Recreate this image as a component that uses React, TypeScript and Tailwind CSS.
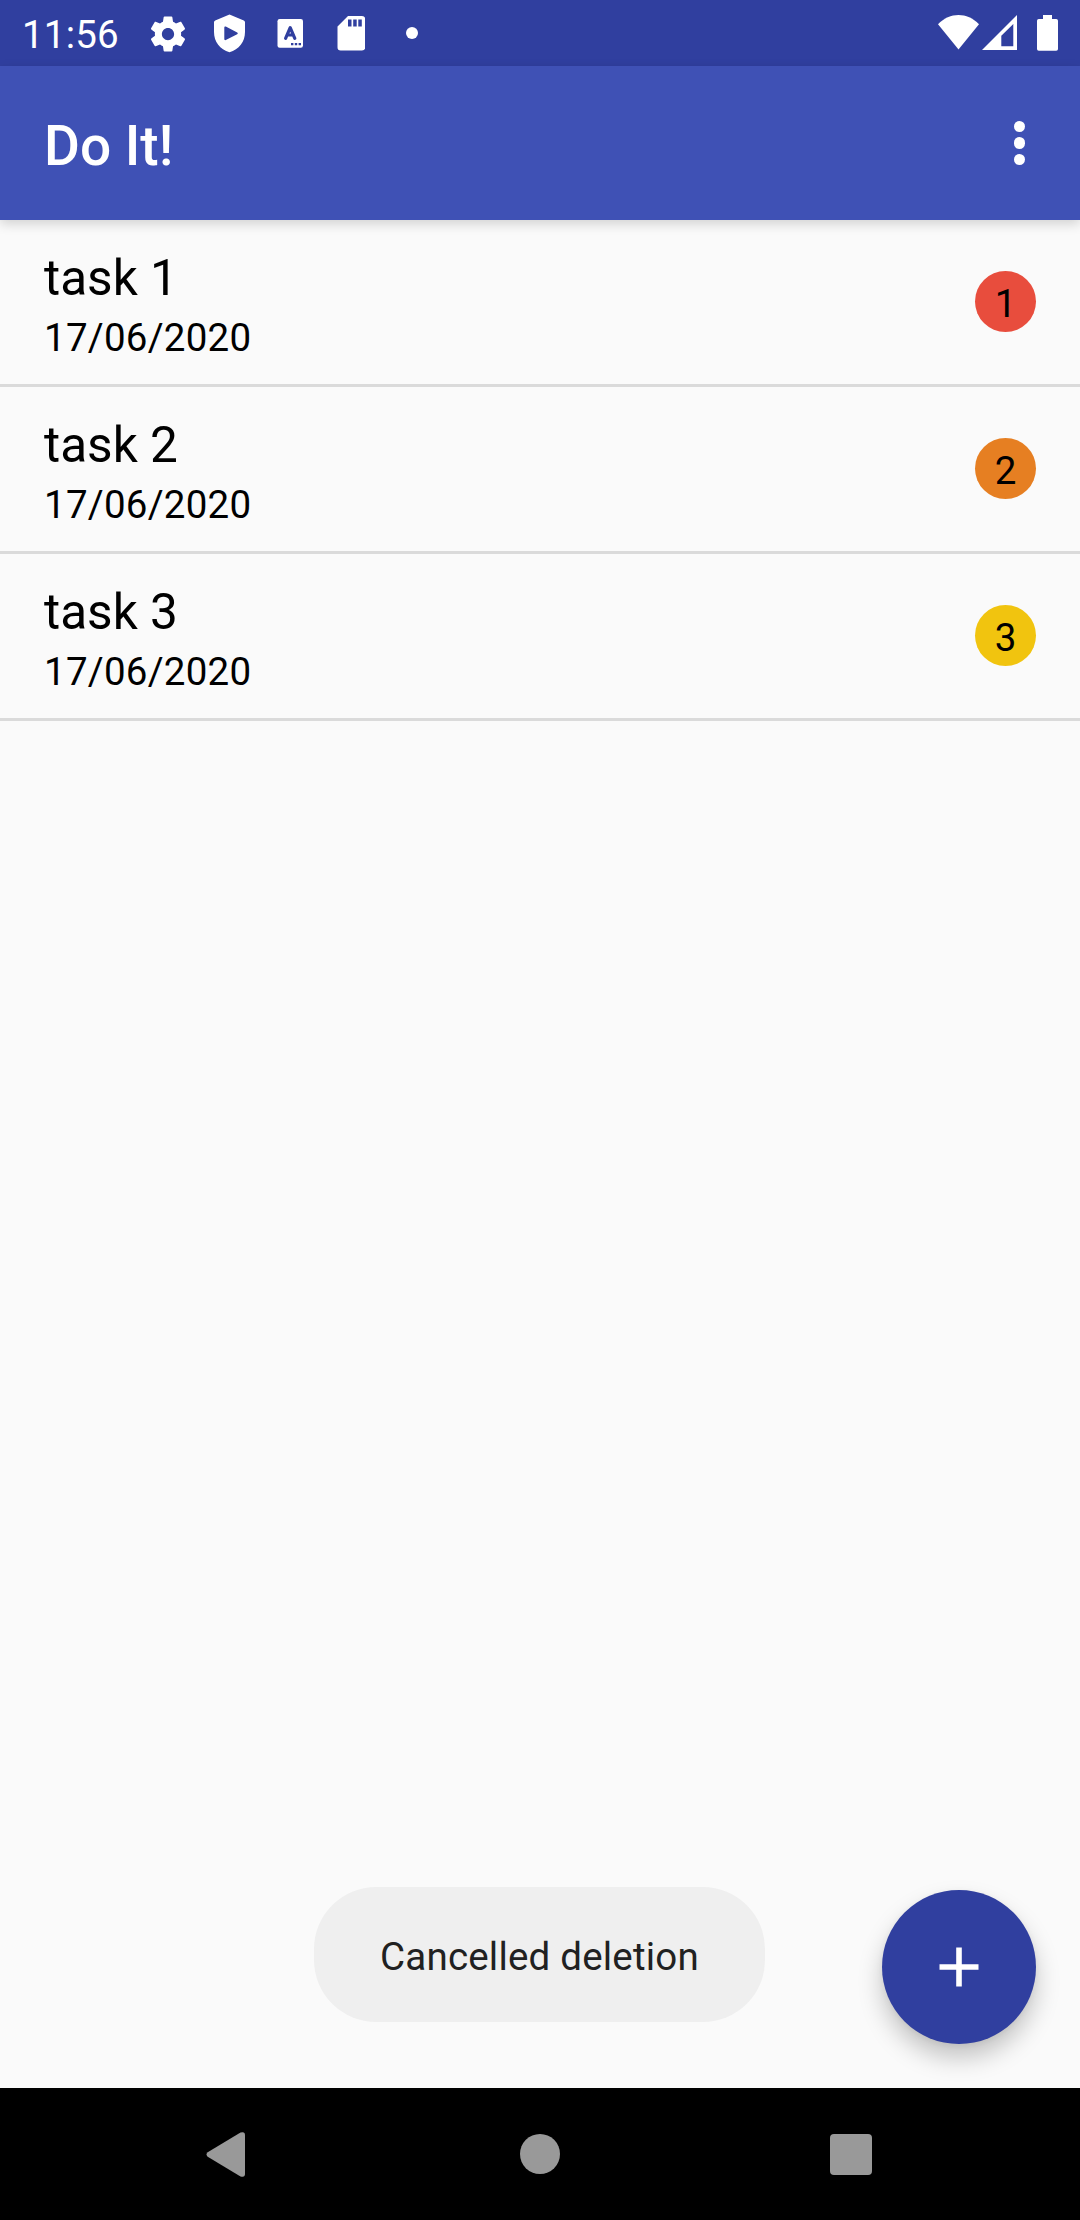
import React from "react";

const tasks = [
  { name: "task 1", date: "17/06/2020", priority: 1, color: "bg-[#e84d3d]" },
  { name: "task 2", date: "17/06/2020", priority: 2, color: "bg-[#e67f22]" },
  { name: "task 3", date: "17/06/2020", priority: 3, color: "bg-[#f1c40f]" },
];

function StatusBar() {
  return (
    <div className="flex h-[66px] items-center bg-[#303f9f] text-white">
      <span className="ml-[22px] w-[123px] pt-[3px] text-[38.5px] leading-[46px] tracking-[0.2px]">11:56</span>
      <svg className="ml-[2px] mt-[1px] size-[42px]" viewBox="0 0 24 24" fill="currentColor">
        <path d="M19.43 12.98c.04-.32.07-.64.07-.98s-.03-.66-.07-.98l2.11-1.65c.19-.15.24-.42.12-.64l-2-3.46c-.12-.22-.39-.3-.61-.22l-2.49 1c-.52-.4-1.08-.73-1.69-.98l-.38-2.65C14.46 2.18 14.25 2 14 2h-4c-.25 0-.46.18-.49.42l-.38 2.65c-.61.25-1.17.59-1.69.98l-2.49-1c-.23-.09-.49 0-.61.22l-2 3.46c-.13.22-.07.49.12.64l2.11 1.65c-.04.32-.07.65-.07.98s.03.66.07.98l-2.11 1.65c-.19.15-.24.42-.12.64l2 3.46c.12.22.39.3.61.22l2.49-1c.52.4 1.08.73 1.69.98l.38 2.65c.03.24.24.42.49.42h4c.25 0 .46-.18.49-.42l.38-2.65c.61-.25 1.17-.59 1.69-.98l2.49 1c.23.09.49 0 .61-.22l2-3.46c.12-.22.07-.49-.12-.64l-2.11-1.65zM12 15.5c-1.93 0-3.5-1.57-3.5-3.5s1.57-3.5 3.5-3.5 3.5 1.57 3.5 3.5-1.57 3.5-3.5 3.5z" />
      </svg>
      <svg className="ml-[25px] h-[66px] w-[31px]" viewBox="214 0 31 66" fill="currentColor" fillRule="evenodd">
        <path d="M229.5 14.5L243.8 20.4Q245 21 245 22.2V32C245 42 239 49.3 229.5 52.3C220 49.3 214 42 214 32V22.2Q214 21 215.2 20.4ZM224.3 27.5V39Q224.3 40.6 225.8 40L237.2 34.2Q238.6 33.3 237.2 32.5L225.8 26.5Q224.3 26 224.3 27.5Z" />
      </svg>
      <svg className="ml-8 h-[66px] w-[26px]" viewBox="277 0 26 66">
        <rect x="277.5" y="19" width="25.5" height="28.7" rx="2.2" fill="currentColor" />
        <path d="M285.6 38.3L290.2 27.6L294.8 38.3M287 35H293.5" fill="none" stroke="#303f9f" strokeWidth="3.2" strokeLinecap="round" strokeLinejoin="round" />
        <path d="M291 43h2.4v2.2H291zM294.8 43h2.4v2.2h-2.4zM298.6 43h2.4v2.2h-2.4z" fill="#303f9f" />
      </svg>
      <svg className="ml-[34px] h-[66px] w-[28px]" viewBox="337 0 28 66" fill="currentColor" fillRule="evenodd">
        <path d="M348 16H362Q365.2 16 365.2 19.2V47.3Q365.2 50.5 362 50.5H340.7Q337.5 50.5 337.5 47.3V26.5ZM348 19.5V26.5H351.5V19.5ZM353.2 19.5V26.5H356.7V19.5ZM358.3 19.5V26.5H361.8V19.5Z" />
      </svg>
      <span className="ml-[41px] size-3 rounded-full bg-white" />
      <svg className="ml-auto h-[66px] w-[42px]" viewBox="938 0 42 66" fill="currentColor">
        <path d="M938 24.3C950 12 967 12 979 24.3L958.5 49.5Z" />
      </svg>
      <svg className="ml-[2px] h-[66px] w-[35px]" viewBox="982 0 35 66" fill="currentColor" fillRule="evenodd">
        <path d="M982 50L1017 15V50ZM1001.3 35.8V46.3H1013.3V24Z" />
      </svg>
      <svg className="ml-5 mr-[22px] h-[66px] w-[21px]" viewBox="1037 0 21 66" fill="currentColor">
        <path d="M1043 15H1052V19H1056.2Q1058 19 1058 20.8V49Q1058 50.8 1056.2 50.8H1038.8Q1037 50.8 1037 49V20.8Q1037 19 1038.8 19H1043Z" />
      </svg>
    </div>
  );
}

function AppBar() {
  return (
    <header className="relative flex h-[154px] items-center justify-between bg-[#3f51b5] px-11 text-white shadow-[0_4px_11px_rgba(0,0,0,0.16)]">
      <h1 className="pt-[5px] text-[55px] font-medium leading-[64px]">Do It!</h1>
      <button className="mr-[11px] flex flex-col gap-[5.3px]" aria-label="More options">
        <span className="size-[11.2px] rounded-full bg-white" />
        <span className="size-[11.2px] rounded-full bg-white" />
        <span className="size-[11.2px] rounded-full bg-white" />
      </button>
    </header>
  );
}

function TaskList() {
  return (
    <ul>
      {tasks.map((task) => (
        <li key={task.name} className="flex h-[167px] items-center justify-between border-b-[3px] border-[#dadada] px-11">
          <div className="pt-[5px]">
            <div className="text-[49.5px] leading-[58px]">{task.name}</div>
            <div className="mt-2 text-[38.5px] leading-[45px] tracking-[0.25px]">{task.date}</div>
          </div>
          <div className={`mb-px flex size-[61px] items-center justify-center rounded-full pt-1 text-[38.5px] leading-[45px] ${task.color}`}>
            {task.priority}
          </div>
        </li>
      ))}
    </ul>
  );
}

function NavigationBar() {
  return (
    <nav className="flex h-[132px] items-center bg-black text-[#999]">
      <svg className="ml-[206px] h-[132px] w-10" viewBox="206 2088 40 132" fill="currentColor">
        <path d="M207.7 2152.3L240.5 2132.6Q245 2131 245 2135.2V2173.8Q245 2178 240.5 2176.4L207.7 2156.7Q205.3 2154.5 207.7 2152.3Z" />
      </svg>
      <span className="ml-[274px] size-10 rounded-full bg-[#999]" />
      <span className="ml-[270px] mt-[1px] size-[41.5px] rounded-[4px] bg-[#999]" />
    </nav>
  );
}

export default function App() {
  return (
    <div className="relative flex h-[2220px] w-[1080px] flex-col overflow-hidden bg-[#fafafa] font-['Roboto',sans-serif] text-black">
      <StatusBar />
      <AppBar />
      <main className="flex-1">
        <TaskList />
      </main>
      <NavigationBar />
      <div className="absolute bottom-[198px] left-[314px] flex h-[135px] w-[451px] items-center justify-center whitespace-nowrap rounded-[62px] bg-[#efefef] pt-[4px] text-[38.5px] leading-[45px] tracking-[0.2px] text-[#212121]">
        Cancelled deletion
      </div>
      <button
        className="absolute bottom-[176px] right-11 flex size-[154px] items-center justify-center rounded-full bg-[#303f9f] text-white shadow-[0_14px_24px_rgba(0,0,0,0.22),0_2px_6px_rgba(0,0,0,0.06)]"
        aria-label="Add task"
      >
        <svg className="size-10" viewBox="0 0 40 40" fill="currentColor">
          <path d="M17.2 0.6h5.6v16.6h16.7v5.6H22.8v16.6h-5.6V22.8H0.5v-5.6h16.7z" />
        </svg>
      </button>
    </div>
  );
}
